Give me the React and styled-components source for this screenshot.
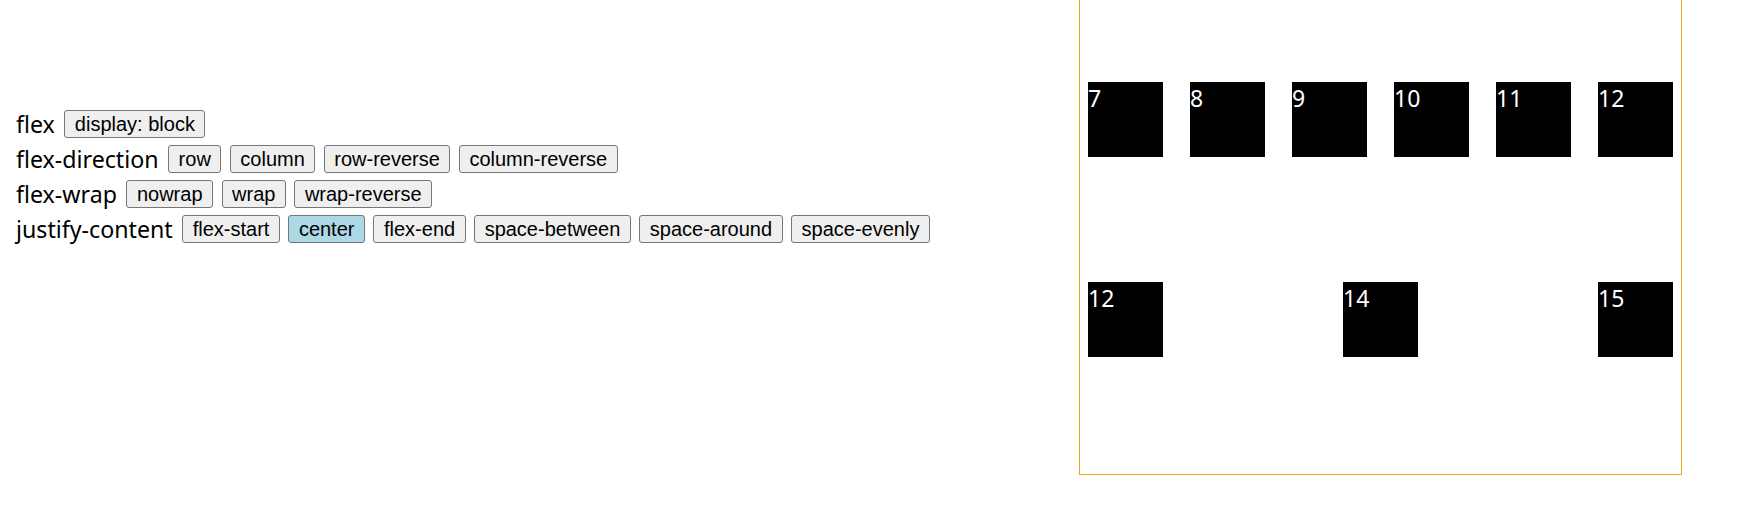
import React from 'react';
import styled, { createGlobalStyle } from 'styled-components';

const GlobalStyle = createGlobalStyle`
  html, body {
    margin: 0;
    padding: 0;
    background: #ffffff;
  }
`;

const Page = styled.div`
  display: flex;
  align-items: flex-start;
  height: 507px;
  overflow: hidden;
  padding-left: 16px;
  padding-right: 71px;
  box-sizing: border-box;
`;

const Controls = styled.div`
  display: flex;
  flex-direction: column;
  padding-top: 106px;
`;

const ControlRow = styled.div`
  display: flex;
  align-items: center;
  gap: 8.5px;
  height: 35px;
`;

const Label = styled.span`
  font-family: "Noto Sans", "Open Sans", sans-serif;
  font-size: 23.2px;
  line-height: 30px;
  color: #000;
  margin-right: 1px;
`;

const OptionButton = styled.button`
  font-family: "Liberation Sans", Arial, sans-serif;
  font-size: 20px;
  line-height: 24px;
  padding: 1px 9.5px;
  border: 1px solid #767676;
  border-radius: 3px;
  background: ${(p) => (p.$active ? '#add8e6' : '#efefef')};
  color: #000;
  cursor: pointer;
`;

const Stage = styled.div`
  margin-left: auto;
  width: 603px;
  height: 475px;
  border: 1px solid #f3a41c;
  border-width: 0 1.5px 1.5px 1.5px;
  display: flex;
  flex-direction: column;
  gap: 109px;
  padding-top: 74px;
  box-sizing: border-box;
`;

const ItemRow = styled.div`
  display: flex;
  justify-content: space-between;
`;

const Item = styled.div`
  width: 75px;
  height: 75px;
  margin: 8px;
  background: #000;
  color: #fff;
  font-family: "Noto Sans", "Open Sans", sans-serif;
  font-size: 23px;
  line-height: normal;
`;

const controls = [
  { label: 'flex', options: ['display: block'] },
  { label: 'flex-direction', options: ['row', 'column', 'row-reverse', 'column-reverse'] },
  { label: 'flex-wrap', options: ['nowrap', 'wrap', 'wrap-reverse'] },
  {
    label: 'justify-content',
    options: ['flex-start', 'center', 'flex-end', 'space-between', 'space-around', 'space-evenly'],
    active: 'center',
  },
];

const rows = [
  ['7', '8', '9', '10', '11', '12'],
  ['12', '14', '15'],
];

export default function App() {
  return (
    <>
      <GlobalStyle />
      <Page>
        <Controls>
          {controls.map((c) => (
            <ControlRow key={c.label}>
              <Label>{c.label}</Label>
              {c.options.map((o) => (
                <OptionButton key={o} $active={c.active === o}>
                  {o}
                </OptionButton>
              ))}
            </ControlRow>
          ))}
        </Controls>
        <Stage>
          {rows.map((r, i) => (
            <ItemRow key={i}>
              {r.map((n, j) => (
                <Item key={j}>{n}</Item>
              ))}
            </ItemRow>
          ))}
        </Stage>
      </Page>
    </>
  );
}
